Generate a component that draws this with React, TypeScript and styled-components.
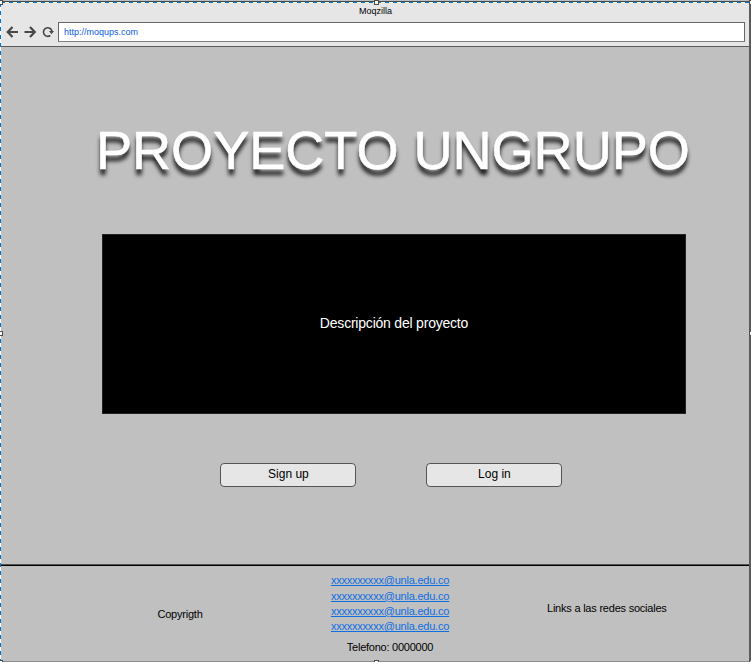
import React from "react";
import styled, { createGlobalStyle } from "styled-components";

const GlobalStyle = createGlobalStyle`
  * { box-sizing: border-box; }
  body { margin: 0; background: #fff; font-family: "Liberation Sans", Arial, sans-serif; color: #000; }
`;

const Browser = styled.div`
  position: relative;
  width: 751px;
  height: 662px;
  display: flex;
  flex-direction: column;
  background: #c0c0c0;
  overflow: hidden;
`;

const Chrome = styled.header`
  height: 47px;
  flex: none;
  display: flex;
  flex-direction: column;
  background: #e6e6e6;
  border-top: 1px solid #b8bcc0;
  border-bottom: 1px solid #5b5b5b;
`;

const WindowTitle = styled.div`
  height: 21px;
  padding-top: 5px;
  text-align: center;
  font-size: 9px;
  line-height: 11px;
`;

const Toolbar = styled.div`
  height: 20px;
  display: flex;
  align-items: center;
  padding: 0 6px 0 6px;
`;

const NavIcons = styled.svg`
  width: 52px;
  height: 20px;
  flex: none;
`;

const AddressBar = styled.div`
  flex: 1;
  height: 20px;
  padding-left: 5px;
  border: 1px solid #666;
  border-bottom-color: #808080;
  background: #fff;
  color: #0a5ce0;
  font-size: 9px;
  line-height: 18px;
`;

const Main = styled.main`
  height: 517px;
  flex: none;
  padding: 72px 63px 0 102px;
`;

const Title = styled.h1`
  margin: 0 0 0 -6px;
  height: 115px;
  font-size: 54.2px;
  font-weight: 400;
  line-height: 62px;
  letter-spacing: -0.08px;
  white-space: nowrap;
  color: #fff;
  -webkit-text-stroke: 0.6px #fff;
  text-shadow: 0 6px 4px rgba(0, 0, 0, 0.9);
`;

const Description = styled.section`
  width: 584px;
  height: 180px;
  display: flex;
  align-items: center;
  justify-content: center;
  padding-bottom: 2px;
  background: #000;
  border: 1px solid #222;
  color: #fff;
  font-size: 14px;
  letter-spacing: -0.21px;
`;

const Actions = styled.div`
  display: flex;
  gap: 70px;
  padding: 49px 0 0 118.4px;
`;

const Button = styled.button`
  width: 136px;
  height: 24px;
  padding: 0 0 3px;
  border: 1px solid #555;
  border-radius: 4px;
  background: #e6e6e6;
  color: #000;
  font: 12px "Liberation Sans", Arial, sans-serif;
`;

const Footer = styled.footer`
  flex: 1;
  display: grid;
  grid-template-columns: 157.5px 173.5px 216px 1fr;
  border-top: 1px solid #555;
  box-shadow: inset 0 1px #000;
  font-size: 11px;
  line-height: 13px;
  letter-spacing: -0.22px;
`;

const FooterText = styled.div<{ $top: number }>`
  padding-top: ${(p) => p.$top}px;
  white-space: nowrap;
`;

const Contact = styled.div`
  width: 118px;
  padding-top: 9.3px;
  display: flex;
  flex-direction: column;
  align-items: center;
  white-space: nowrap;
`;

const Mail = styled.a`
  height: 15.3px;
  color: #0f6fe0;
  text-decoration: underline;
`;

const Phone = styled.div`
  margin-top: 6px;
  letter-spacing: -0.25px;
`;

const Frame = styled.div`
  position: absolute;
  inset: 2px 0 0 0;
  border-right: 2px solid #5b5b5b;
  border-bottom: 1px solid #8c8c8c;
`;

const TopDashes = styled.div`
  position: absolute;
  inset: 1px 0 auto 0;
  height: 2px;
  border-top: 1px solid #4d4d4d;
  background: repeating-linear-gradient(90deg, #fff 0 1px, #0078d7 1px 5px, #fff 5px 8px);
`;

const LeftDashes = styled.div`
  position: absolute;
  inset: 0 auto 0 0;
  width: 1px;
  background: repeating-linear-gradient(180deg, #fff 0 3px, #0078d7 3px 7px, #fff 7px 8px);
`;

const Handle = styled.i<{ $x: number; $y: number }>`
  position: absolute;
  left: ${(p) => p.$x}px;
  top: ${(p) => p.$y}px;
  width: 5px;
  height: 5px;
  border: 1px solid #4d4d4d;
  background: #fff;
`;

const mails = Array.from({ length: 4 }, () => "xxxxxxxxxx@unla.edu.co");
const handles = [[-2, 0], [374, 0], [749, 0], [-2, 331], [749, 331], [-2, 660], [374, 660], [749, 660]];

export default function App() {
  return (
    <>
      <GlobalStyle />
      <Browser>
        <Chrome>
          <WindowTitle>Moqzilla</WindowTitle>
          <Toolbar>
            <NavIcons viewBox="0 0 52 20" fill="none" stroke="#484848" strokeWidth="2.2">
              <path d="M12 10H2M6.5 5 1.7 10l4.8 5" />
              <path d="M18.5 10h10M24 5l4.8 5-4.8 5" />
              <path d="M44.3 13.5A4.3 4.3 0 1 1 46 9.6" strokeWidth="1.6" />
              <path d="M43 9h5l-2.5 3.3z" fill="#484848" stroke="none" />
            </NavIcons>
            <AddressBar>http://moqups.com</AddressBar>
          </Toolbar>
        </Chrome>
        <Main>
          <Title>PROYECTO UNGRUPO</Title>
          <Description>Descripción del proyecto</Description>
          <Actions>
            <Button>Sign up</Button>
            <Button>Log in</Button>
          </Actions>
        </Main>
        <Footer>
          <span />
          <FooterText $top={43}>Copyrigth</FooterText>
          <Contact>
            {mails.map((mail, i) => (
              <Mail key={i}>{mail}</Mail>
            ))}
            <Phone>Telefono: 0000000</Phone>
          </Contact>
          <FooterText $top={37}>Links a las redes sociales</FooterText>
        </Footer>
        <Frame />
        <TopDashes />
        <LeftDashes />
        {handles.map(([x, y]) => (
          <Handle key={`${x}-${y}`} $x={x} $y={y} />
        ))}
      </Browser>
    </>
  );
}
